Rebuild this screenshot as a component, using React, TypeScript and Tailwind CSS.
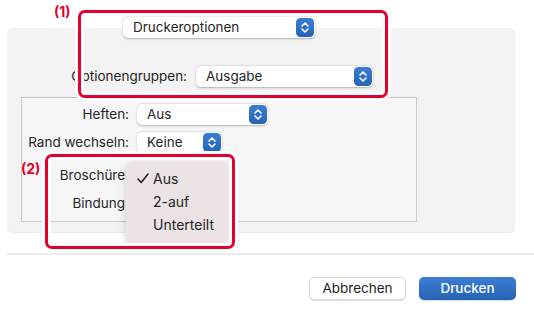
import React from 'react'

// blue up/down stepper used by mac popup buttons
function Stepper() {
  return (
    <svg width="18" height="19" viewBox="0 0 18 19" className="shrink-0">
      <defs>
        <linearGradient id="stp" x1="0" y1="0" x2="0" y2="1">
          <stop offset="0" stopColor="#3a7fd5" />
          <stop offset="1" stopColor="#2563b6" />
        </linearGradient>
      </defs>
      <rect x="0" y="0" width="18" height="19" rx="4.5" fill="url(#stp)" />
      <path d="M6 8l3-3 3 3M6 11l3 3 3-3" fill="none" stroke="#fff" strokeWidth="1.6" strokeLinecap="round" strokeLinejoin="round" />
    </svg>
  )
}

function Popup({ label, width }: { label: string; width: string }) {
  return (
    <div className={`${width} h-[21px] flex items-center justify-between rounded-[5px] bg-white pl-[10px] pr-px shadow-[0_0.5px_2px_rgba(0,0,0,0.28)]`}>
      <span className="whitespace-nowrap">{label}</span>
      <Stepper />
    </div>
  )
}

function Row({ label, popup, width, className = '' }: { label: string; popup: string; width: string; className?: string }) {
  return (
    <div className={`flex items-center ${className}`}>
      <span className="w-[107px] text-right whitespace-nowrap">{label}</span>
      <div className="ml-[8px]">
        <Popup label={popup} width={width} />
      </div>
    </div>
  )
}

const MENU = ['Aus', '2-auf', 'Unterteilt']

export default function App() {
  return (
    <div className="relative w-[534px] h-[316px] overflow-hidden bg-white text-[13.5px] leading-[17px] text-[#262626] font-[Inter,sans-serif]">
      <div className="pt-[28px] pl-[7px] pr-[19px]">
        <div className="h-[204px] rounded-[5px] bg-[#f3f3f3] flex flex-col shadow-[0_1px_0_#ebebeb]">
          <div className="-mt-[11px] ml-[116px]">
            <Popup label="Druckeroptionen" width="w-[192px]" />
          </div>
          <div className="mt-[28px] flex items-center">
            <span className="w-[180px] text-right whitespace-nowrap">Optionengruppen:</span>
            <div className="ml-[9px]">
              <Popup label="Ausgabe" width="w-[177px]" />
            </div>
          </div>
          <div className="mt-[10px] ml-[14px] w-[396px] h-[125px] border border-[#cbcbcb] border-t-[#c4c4c4] bg-[#f6f6f6] pt-[6px] flex flex-col">
            <Row label="Heften:" popup="Aus" width="w-[131px]" />
            <Row label="Rand wechseln:" popup="Keine" width="w-[85px]" className="mt-[7px]" />
            <Row label="Broschüre:" popup="Aus" width="w-[85px]" className="mt-[12px]" />
            <Row label="Bindung:" popup="Links" width="w-[85px]" className="mt-[7px]" />
          </div>
        </div>
      </div>

      <div className="mt-[21px] ml-[7px] h-[2px] bg-[#ececec]" />

      <div className="mt-[22px] flex justify-end gap-[13px] pr-[18px]">
        <button className="w-[97px] h-[23px] rounded-[5px] bg-white border border-[#d6d6d6] shadow-[0_1px_1px_rgba(0,0,0,0.12)] text-[#222]">
          Abbrechen
        </button>
        <button className="w-[97px] h-[23px] rounded-[5px] bg-gradient-to-b from-[#3a7ed4] to-[#2763b5] text-white font-medium shadow-[0_1px_1px_rgba(0,0,0,0.15)]">
          Drucken
        </button>
      </div>

      {/* open popup menu */}
      <div className="absolute left-[126px] top-[162px] w-[103px] h-[81px] rounded-[6px] bg-[#ebe3e4] shadow-[0_2px_8px_rgba(0,0,0,0.18)] pt-[5px] text-[14px]">
        {MENU.map((item, i) => (
          <div key={item} className="h-[23px] flex items-center">
            <span className="w-[27px] pl-[11px] flex items-center">
              {i === 0 && (
                <svg width="12" height="11" viewBox="0 0 12 11">
                  <path d="M1 6l3.2 3.5L11 1" fill="none" stroke="#222" strokeWidth="1.6" strokeLinecap="round" strokeLinejoin="round" />
                </svg>
              )}
            </span>
            <span>{item}</span>
          </div>
        ))}
      </div>

      {/* annotations */}
      <div className="absolute left-[78px] top-[10px] w-[310px] h-[88px] rounded-[7px] border-[3px] border-[#e3002c] shadow-[0_0_0_3px_#fff,inset_0_0_0_3px_#fff]" />
      <div className="absolute left-[45px] top-[154px] w-[190px] h-[95px] rounded-[7px] border-[3px] border-[#e3002c] shadow-[0_0_0_3px_#fff,inset_0_0_0_3px_#fff]" />
      <span className="absolute left-[54px] top-[3px] text-[14px] font-bold text-[#e3002c]">(1)</span>
      <span className="absolute left-[21px] top-[160px] text-[14px] font-bold text-[#e3002c]">(2)</span>
    </div>
  )
}
